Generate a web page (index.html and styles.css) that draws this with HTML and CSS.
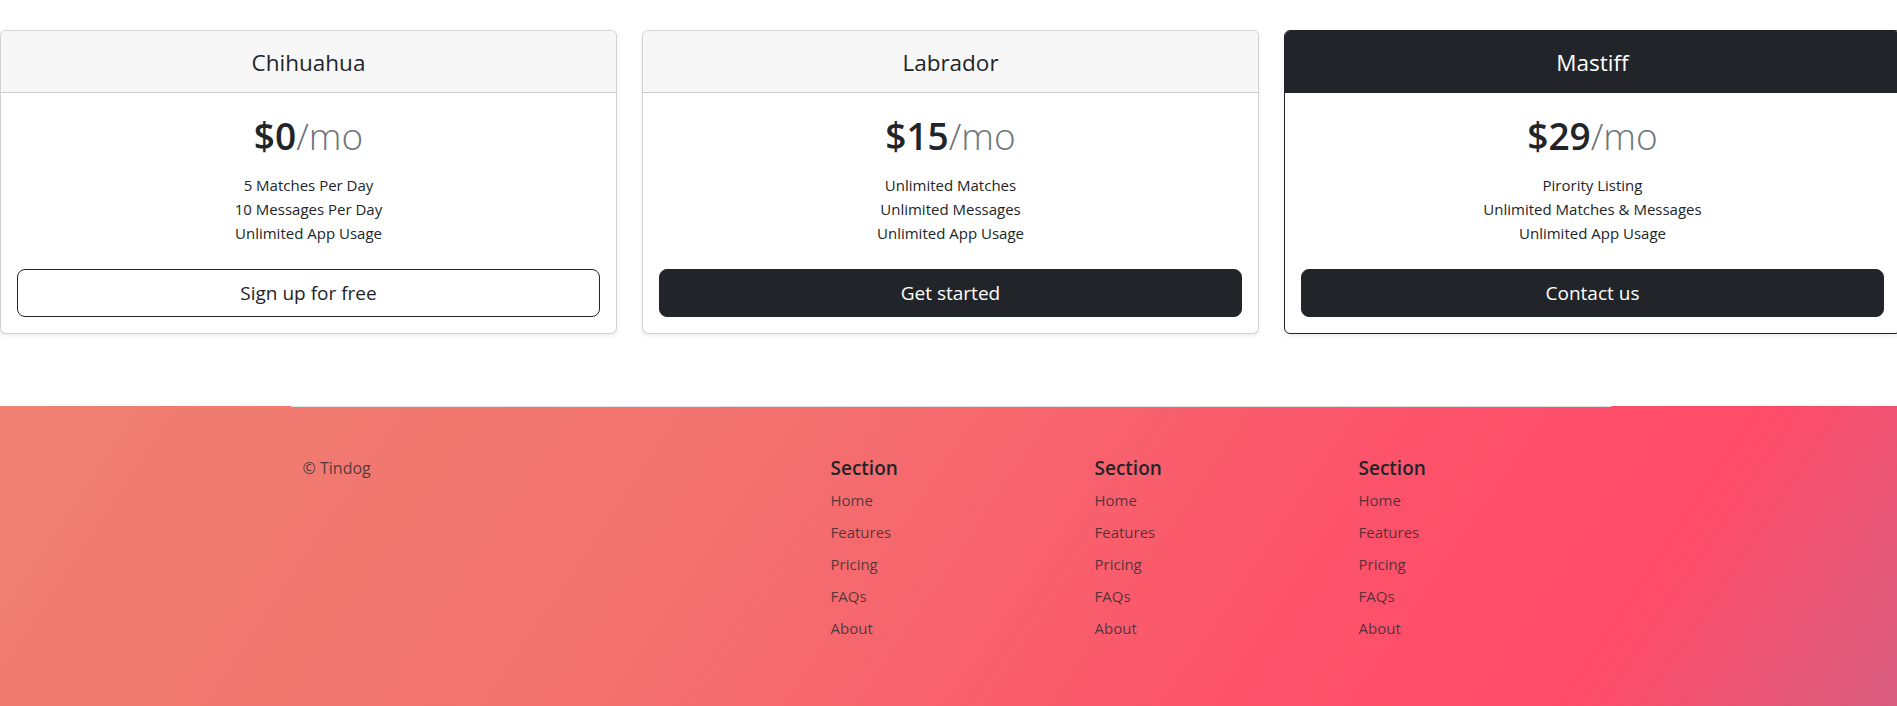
FILE: index.html
```html
<!DOCTYPE html>
<html lang="en">
<head>
<meta charset="utf-8">
<title>Tindog Pricing</title>
<link rel="stylesheet" href="styles.css">
</head>
<body>
<section class="pricing">
  <div class="cards">
    <div class="card">
      <div class="card-header"><h4 class="plan">Chihuahua</h4></div>
      <div class="card-body">
        <h1 class="price">$0<span class="per">/mo</span></h1>
        <ul class="features">
          <li>5 Matches Per Day</li>
          <li>10 Messages Per Day</li>
          <li>Unlimited App Usage</li>
        </ul>
        <button class="btn btn-outline">Sign up for free</button>
      </div>
    </div>
    <div class="card">
      <div class="card-header"><h4 class="plan">Labrador</h4></div>
      <div class="card-body">
        <h1 class="price">$15<span class="per">/mo</span></h1>
        <ul class="features">
          <li>Unlimited Matches</li>
          <li>Unlimited Messages</li>
          <li>Unlimited App Usage</li>
        </ul>
        <button class="btn btn-dark">Get started</button>
      </div>
    </div>
    <div class="card card-dark">
      <div class="card-header"><h4 class="plan">Mastiff</h4></div>
      <div class="card-body">
        <h1 class="price">$29<span class="per">/mo</span></h1>
        <ul class="features">
          <li>Pirority Listing</li>
          <li>Unlimited Matches &amp; Messages</li>
          <li>Unlimited App Usage</li>
        </ul>
        <button class="btn btn-dark">Contact us</button>
      </div>
    </div>
  </div>
</section>
<footer class="footer">
  <div class="footer-inner">
    <div class="fcol"><small class="copy">&copy; Tindog</small></div>
    <div class="fcol"></div>
    <div class="fcol">
      <h5 class="fhead">Section</h5>
      <ul class="flinks">
        <li><a href="#">Home</a></li>
        <li><a href="#">Features</a></li>
        <li><a href="#">Pricing</a></li>
        <li><a href="#">FAQs</a></li>
        <li><a href="#">About</a></li>
      </ul>
    </div>
    <div class="fcol">
      <h5 class="fhead">Section</h5>
      <ul class="flinks">
        <li><a href="#">Home</a></li>
        <li><a href="#">Features</a></li>
        <li><a href="#">Pricing</a></li>
        <li><a href="#">FAQs</a></li>
        <li><a href="#">About</a></li>
      </ul>
    </div>
    <div class="fcol">
      <h5 class="fhead">Section</h5>
      <ul class="flinks">
        <li><a href="#">Home</a></li>
        <li><a href="#">Features</a></li>
        <li><a href="#">Pricing</a></li>
        <li><a href="#">FAQs</a></li>
        <li><a href="#">About</a></li>
      </ul>
    </div>
  </div>
</footer>
</body>
</html>
```

FILE: styles.css
```css
* { box-sizing: border-box; }

html, body {
  margin: 0;
  padding: 0;
  background: #fff;
  overflow-x: hidden;
}

body {
  font-family: "Segoe UI", "Open Sans", "Noto Sans", sans-serif;
  color: #212529;
  font-size: 16px;
  line-height: 24px;
}

.pricing {
  padding: 30px 0 72px;
}

.cards {
  display: grid;
  grid-template-columns: repeat(3, 617px);
  column-gap: 25px;
  width: max-content;
}

.card {
  background: #fff;
  border: 1px solid rgba(0, 0, 0, 0.175);
  border-radius: 6px;
  box-shadow: 0 2px 4px rgba(0, 0, 0, 0.075);
  text-align: center;
  overflow: hidden;
}

.card-header {
  padding: 18px 16px 15px;
  background: #f7f7f7;
  border-bottom: 1px solid rgba(0, 0, 0, 0.175);
}

.plan {
  margin: 0;
  font-size: 22.5px;
  font-weight: 400;
  line-height: 28px;
}

.card-dark {
  border-color: #212529;
}

.card-dark .card-header {
  background: #212529;
  color: #fff;
  border-bottom-color: #212529;
}

.card-body {
  padding: 16px;
}

.price {
  margin: 0 0 13px;
  padding-top: 3px;
  font-size: 37px;
  font-weight: 600;
  line-height: 48px;
}

.per {
  color: #6c757d;
  font-weight: 300;
}

.features {
  list-style: none;
  margin: 0 0 24px;
  padding: 0;
  font-size: 15px;
  line-height: 24px;
}

.btn {
  display: block;
  width: 100%;
  padding: 8px 16px;
  font-family: inherit;
  font-size: 19px;
  line-height: 30px;
  border: 1px solid #212529;
  border-radius: 8px;
  cursor: pointer;
}

.btn-outline {
  background: #fff;
  color: #212529;
}

.btn-dark {
  background: #212529;
  color: #fff;
}

.footer {
  height: 300px;
  background: linear-gradient(124deg, #ef8071 0%, #f3716f 38%, #fd516a 70%, #ff4b68 84%, #d75c7f 100%);
}

.footer-inner {
  width: 1320px;
  margin-left: calc(50% - 658px);
  border-top: 1px solid #dee2e6;
  padding-top: 49px;
  display: grid;
  grid-template-columns: repeat(5, 1fr);
}

.fcol {
  padding: 0 12px;
}

.copy {
  display: block;
  font-size: 16px;
  line-height: 24px;
  color: rgba(33, 37, 41, 0.75);
}

.fhead {
  margin: 0 0 8px;
  font-size: 19px;
  font-weight: 600;
  line-height: 24px;
}

.flinks {
  list-style: none;
  margin: 0;
  padding: 0;
  font-size: 15px;
}

.flinks li {
  margin-bottom: 8px;
  line-height: 24px;
}

.flinks a {
  color: rgba(33, 37, 41, 0.75);
  text-decoration: none;
}
```
